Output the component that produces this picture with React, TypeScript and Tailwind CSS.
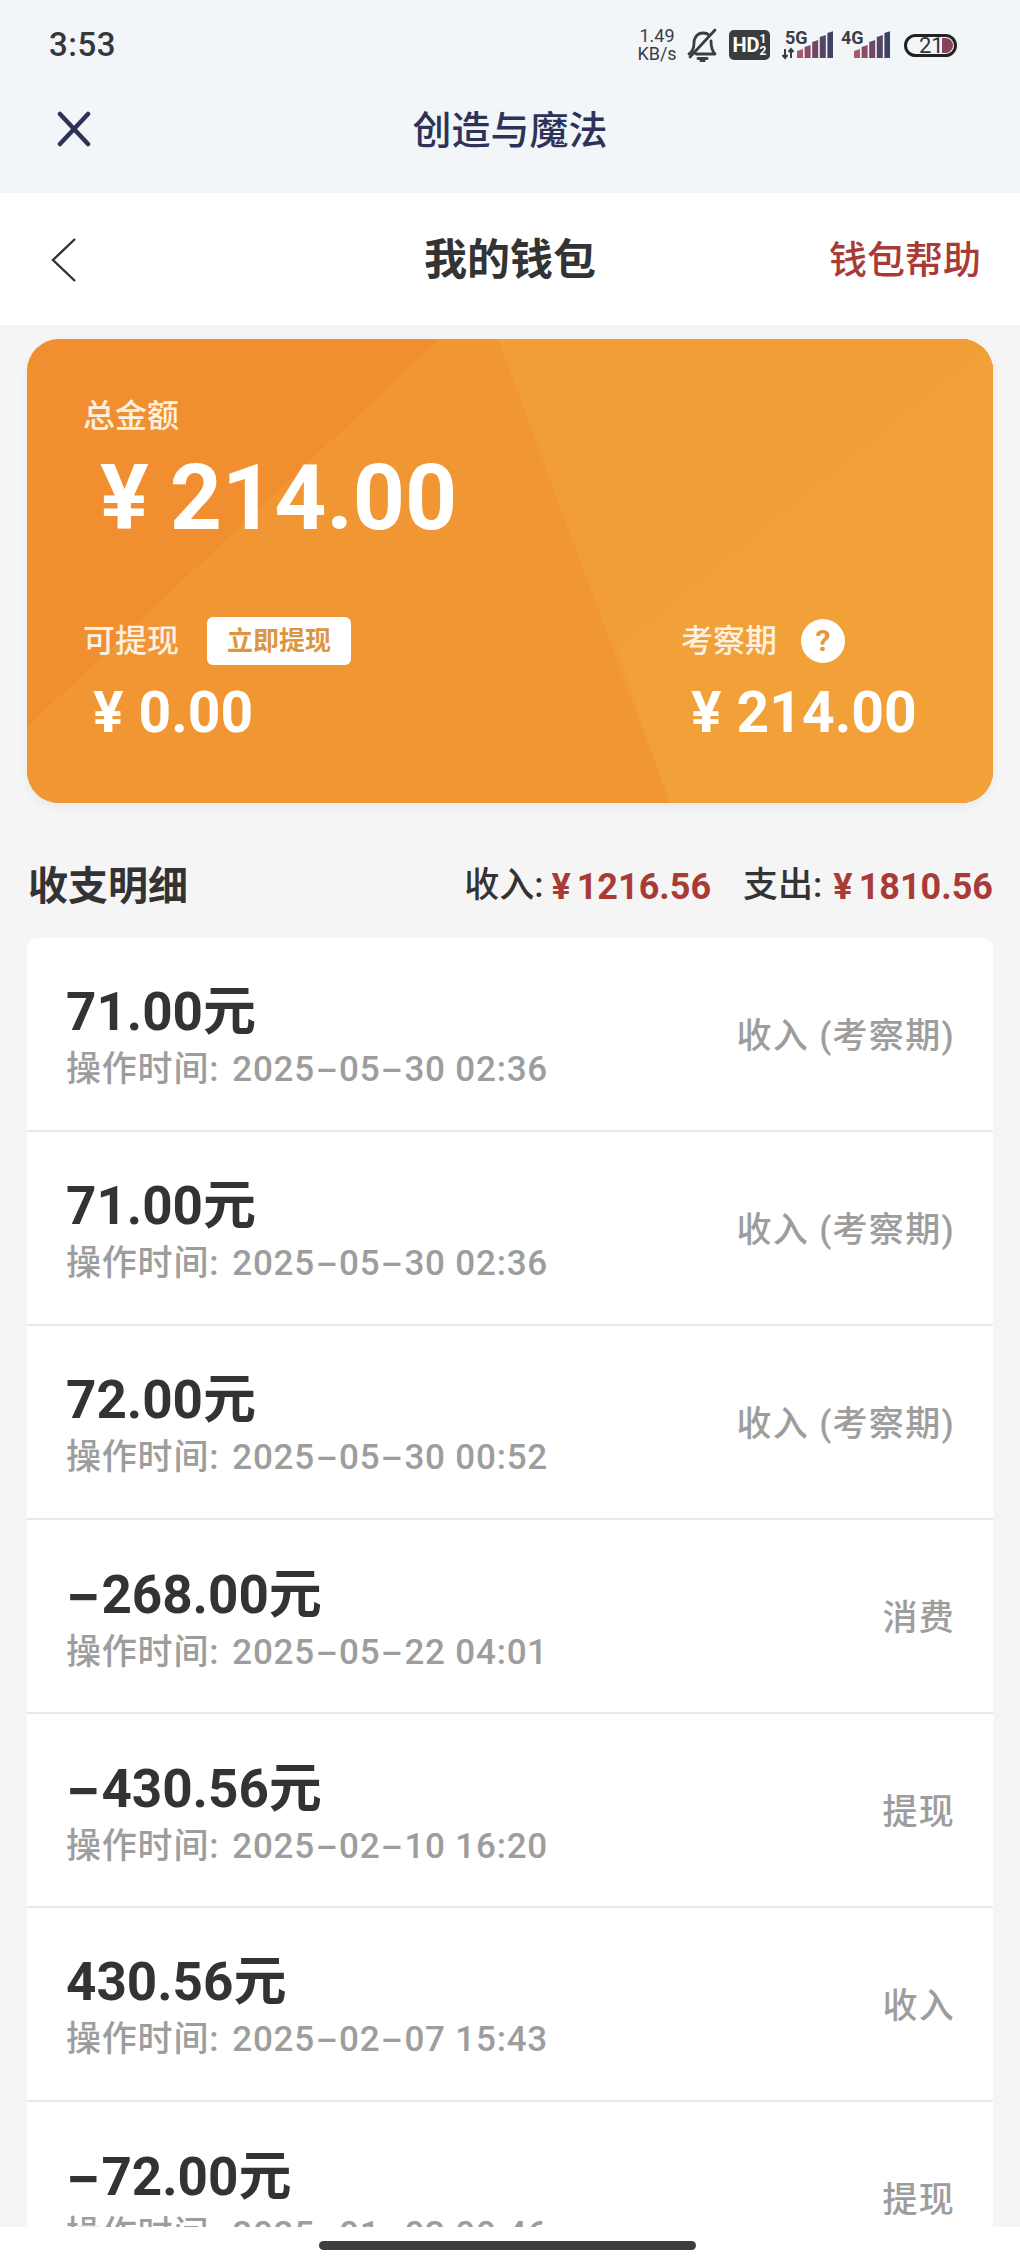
import React from "react";

const CJK = "font-['Roboto','Noto_Sans_CJK_SC',sans-serif]";

function Dashed({ text }: { text: string }) {
  const parts = text.split("-");
  return (
    <>
      {parts.map((p, i) => (
        <React.Fragment key={i}>
          {i > 0 && <span className="font-['Inter'] inline-block scale-x-150 mx-[0.1em]">-</span>}
          {p}
        </React.Fragment>
      ))}
    </>
  );
}

function Bell() {
  return (
    <svg width="30" height="34" viewBox="0 0 30 34" fill="none" stroke="#3a3d42" strokeWidth="2.8" strokeLinecap="round" strokeLinejoin="round">
      <path d="M2 26c3-2 5-5 5-11 0-6 4-10 9-10 3 0 5 1 6 2" />
      <path d="M24 13c0 6 1 10 4 13H9" />
      <path d="M3 29 L28 2" />
      <path d="M11 30.5h9" />
      <path d="M14 33h3" />
    </svg>
  );
}

function Signal({ label, x0, w, arrows = false }: { label: string; x0: number; w: number; arrows?: boolean }) {
  const bars = [
    { i: 0, h: 9, f: "#ab5a6e" },
    { i: 1, h: 13, f: "#8a4d64" },
    { i: 2, h: 18, f: "#6f4964" },
    { i: 3, h: 23, f: "#564665" },
    { i: 4, h: 27, f: "#404265" },
  ];
  return (
    <div className="relative h-[30px]" style={{ width: w }}>
      <svg width={w} height="30" viewBox={`0 0 ${w} 30`}>
        {bars.map((b) => {
          const x = x0 + b.i * 7.6;
          return <path key={b.i} d={`M${x} ${28 - b.h + 2}L${x + 6} ${28 - b.h}V28H${x}Z`} fill={b.f} />;
        })}
        {arrows && <path d="M4 19v9M1.5 25l2.5 3 2.5-3M10 28v-9M7.5 22l2.5-3 2.5 3" stroke="#3a3d42" strokeWidth="2" fill="none" />}
      </svg>
      <span className={`absolute top-[0px] text-[18px] leading-[16px] font-bold text-[#3a3d42] font-['Roboto'] ${arrows ? "left-[4px]" : "left-[0px]"}`}>{label}</span>
    </div>
  );
}

function Row({ amount, time, label }: { amount: string; time: string; label: string }) {
  return (
    <div className="h-[194px] shrink-0 bg-white border-b-2 border-[#e9e9e9] flex items-center justify-between pl-[39px] pr-[38px]">
      <div className="flex flex-col pt-[6px]">
        <div className={`${CJK} text-[53px] leading-[62px] font-bold text-[#333333]`}>
          <Dashed text={amount} />元
        </div>
        <div className={`${CJK} text-[35px] leading-[46px] mt-[2px] font-medium text-[#9d9d9d] tracking-[0.8px]`}>
          操作时间:<span className="ml-[13px]"><Dashed text={time} /></span>
        </div>
      </div>
      <div className={`${CJK} pt-[5px] text-[35px] leading-[44px] text-[#9d9d9d] font-medium tracking-[1.3px] whitespace-pre`}>{label}</div>
    </div>
  );
}

const rows = [
  { amount: "71.00", time: "2025-05-30 02:36", label: "收入 (考察期)" },
  { amount: "71.00", time: "2025-05-30 02:36", label: "收入 (考察期)" },
  { amount: "72.00", time: "2025-05-30 00:52", label: "收入 (考察期)" },
  { amount: "-268.00", time: "2025-05-22 04:01", label: "消费" },
  { amount: "-430.56", time: "2025-02-10 16:20", label: "提现" },
  { amount: "430.56", time: "2025-02-07 15:43", label: "收入" },
  { amount: "-72.00", time: "2025-01-03 00:46", label: "提现" },
];

export default function App() {
  return (
    <div className={`relative w-[1020px] h-[2267px] overflow-hidden bg-[#f5f5f5] ${CJK}`}>
      {/* app header */}
      <div className="h-[193px] bg-[#f3f6f9] flex flex-col">
        <div className="h-[90px] shrink-0 flex items-center justify-between pl-[49px] pr-[63px]">
          <span className="text-[33px] font-medium text-[#34373b] font-['Roboto'] tracking-[0.5px]">3:53</span>
          <div className="flex items-center">
            <div className="text-[18px] leading-[18px] text-[#3a3d42] font-['Roboto'] text-center w-[40px]">
              1.49
              <br />
              KB/s
            </div>
            <div className="ml-[10px]"><Bell /></div>
            <div className="ml-[12px] w-[41px] h-[30px] rounded-[5px] bg-[#3a3c3f] flex items-center justify-center text-white font-bold font-['Roboto'] text-[20px] leading-none">
              HD<span className="text-[12px] leading-[12px] text-center">1<br />2</span>
            </div>
            <div className="ml-[11px]"><Signal label="5G" x0={16} w={52} arrows /></div>
            <div className="ml-[8px]"><Signal label="4G" x0={13} w={49} /></div>
            <div className="ml-[14px] w-[53px] h-[23px] rounded-full border-[3px] border-[#222] flex items-center justify-end overflow-hidden pr-[1px] relative">
              <span className="absolute left-[12px] top-[-2px] text-[22px] leading-[22px] text-[#333] font-['Roboto']">21</span>
              <div className="w-[11px] h-[15px] bg-[#8a4257] rounded-r-full" />
            </div>
          </div>
        </div>
        <div className="relative h-[80px] shrink-0 flex items-center justify-center pt-[2px]">
          <svg className="absolute left-[57px] top-[21px]" width="34" height="36" viewBox="0 0 34 36" fill="none" stroke="#2d3358" strokeWidth="4.5" strokeLinecap="round">
            <path d="M3 3 31 33M31 3 3 33" />
          </svg>
          <span className="text-[39px] font-medium text-[#2d3358]">创造与魔法</span>
        </div>
      </div>

      {/* page nav */}
      <div className="relative h-[132px] bg-white flex items-center justify-center pt-[2px]">
        <svg className="absolute left-[51px] top-[45px]" width="26" height="44" viewBox="0 0 26 44" fill="none" stroke="#333" strokeWidth="2.4">
          <path d="M24 1 2 22l22 21" />
        </svg>
        <span className="text-[43px] font-bold text-[#333333]">我的钱包</span>
        <span className="absolute right-[39px] top-[41px] text-[38px] leading-[52px] font-medium text-[#a93b37]">钱包帮助</span>
      </div>

      {/* balance card */}
      <div className="relative mx-[27px] mt-[14px] h-[464px] rounded-[32px] overflow-hidden bg-[#f18e2f] shadow-[0_4px_10px_rgba(0,0,0,0.05)] text-white">
        <svg className="absolute inset-0" width="967" height="464" viewBox="0 0 967 464">
          <path d="M412 0H967V464H0V388Z" fill="#f09633" />
          <path d="M471 0H967V464H643Z" fill="#f19e37" />
          <path d="M967 4V464H643L591 311Z" fill="#f2a139" />
        </svg>
        <div className="relative h-full flex flex-col">
          <div className="pl-[56px] pt-[56px] text-[32px] leading-[42px] font-medium text-[#fdf0df]">总金额</div>
          <div className="pl-[73px] mt-[11px] flex items-center text-[91px] leading-[100px] font-bold">
            <span className="mr-[21px]">¥</span>214.00
          </div>
          <div className="flex justify-between mt-[69px]">
            <div className="pl-[56px]">
              <div className="flex items-center h-[48px]">
                <span className="text-[32px] font-medium text-[#fdf0df]">可提现</span>
                <span className="ml-[28px] w-[144px] h-[48px] rounded-[6px] bg-white text-[#dd9640] text-[26px] font-bold flex items-center justify-center">立即提现</span>
              </div>
              <div className="pl-[10px] mt-[15px] text-[57px] leading-[66px] font-bold"><span className="mr-[15px]">¥</span>0.00</div>
            </div>
            <div className="w-[312px]">
              <div className="flex items-center h-[48px]">
                <span className="text-[32px] font-medium text-[#fdf0df]">考察期</span>
                <span className="ml-[24px] w-[44px] h-[44px] rounded-full bg-white text-[#e8963a] text-[30px] leading-none font-bold flex items-center justify-center">?</span>
              </div>
              <div className="pl-[10px] mt-[15px] text-[57px] leading-[66px] font-bold"><span className="mr-[15px]">¥</span>214.00</div>
            </div>
          </div>
        </div>
      </div>

      {/* heading */}
      <div className="h-[135px] pt-[32px] pl-[28px] pr-[27px] flex items-center justify-between">
        <span className="text-[40px] font-bold text-[#333333]">收支明细</span>
        <div className="flex items-center text-[35px] font-medium text-[#333333]">
          <span>收入:</span>
          <span className="ml-[8px] text-[36px] font-bold text-[#a93b37]"><span className="mr-[6px]">¥</span>1216.56</span>
          <span className="ml-[32px]">支出:</span>
          <span className="ml-[11px] text-[36px] font-bold text-[#a93b37]"><span className="mr-[6px]">¥</span>1810.56</span>
        </div>
      </div>

      {/* list */}
      <div className="mx-[27px] rounded-t-[10px] overflow-hidden flex flex-col">
        {rows.map((r, i) => (
          <Row key={i} {...r} />
        ))}
      </div>

      {/* gesture bar */}
      <div className="absolute left-0 right-0 bottom-0 h-[40px] bg-white">
        <div className="absolute left-[319px] top-[14px] w-[377px] h-[9px] rounded-full bg-[#3e3e3e]" />
      </div>
    </div>
  );
}
